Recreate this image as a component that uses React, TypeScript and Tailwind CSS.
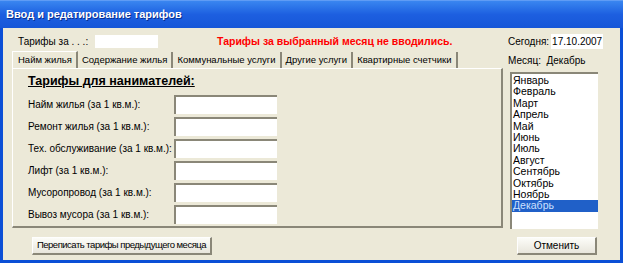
import React from "react";

const months = ["Январь","Февраль","Март","Апрель","Май","Июнь","Июль","Август","Сентябрь","Октябрь","Ноябрь","Декабрь"];
const rows = ["Найм жилья (за 1 кв.м.):","Ремонт жилья (за 1 кв.м.):","Тех. обслуживание (за 1 кв.м.):","Лифт (за 1 кв.м.):","Мусоропровод (за 1 кв.м.):","Вывоз мусора (за 1 кв.м.):"];
const tabs = ["Найм жилья","Содержание жилья","Коммунальные услуги","Другие услуги","Квартирные счетчики"];

export default function App() {
  return (
    <div className="w-[623px] h-[263px] flex flex-col bg-[#0b4fd6] overflow-hidden text-[10px] text-black" style={{ fontFamily: '"Liberation Sans", Arial, sans-serif' }}>
      <div className="h-[28px] shrink-0 flex items-center pl-[6px] bg-gradient-to-b from-[#3a86f0] via-[#1d5fe0] to-[#1656d8] border-t border-[#5f9cf5]">
        <span className="text-white font-bold text-[11px]" style={{ textShadow: "1px 1px 0 #0a2f8f" }}>Ввод и редатирование тарифов</span>
      </div>
      <div className="flex-1 mx-[3px] mb-[3px] bg-[#ece9d8] flex flex-col">
        <div className="flex">
          {/* left column */}
          <div className="ml-[9px] w-[491px] flex flex-col">
            <div className="h-[25px] flex items-center pt-[2px]">
              <span className="ml-[6px] w-[77px] whitespace-nowrap">Тарифы за . . .:</span>
              <div className="w-[63px] h-[13px] bg-white" />
              <span className="ml-[59px] text-[#ff0000] font-bold text-[10.5px] whitespace-nowrap">Тарифы за выбранный месяц не вводились.</span>
            </div>
            <div className="h-[15px] flex items-end">
              {tabs.map((t, i) => (
                <div key={t} className={"flex items-center px-[4px] text-[9.5px] border-r-2 border-r-[#8a8778] " + (i === 0 ? "h-[17px] border-l border-t border-white bg-[#ece9d8] pl-[5px]" : "h-[16px]")}>
                  <span className="whitespace-nowrap">{t}</span>
                </div>
              ))}
            </div>
            <div className="h-[160px] border-l border-t border-white border-r-2 border-b-2 border-r-[#8a8778] border-b-[#8a8778] pl-[15px] pt-[4px]">
              <div className="font-bold underline text-[12.5px] leading-[16px] whitespace-nowrap">Тарифы для нанимателей:</div>
              <div className="mt-[6px] flex flex-col gap-[3px]">
                {rows.map((r) => (
                  <div key={r} className="flex items-center h-[19px]">
                    <span className="w-[146px] whitespace-nowrap">{r}</span>
                    <div className="w-[103px] h-[19px] bg-white border-t-2 border-l-2 border-[#8a8778]" />
                  </div>
                ))}
              </div>
            </div>
          </div>
          {/* right column */}
          <div className="ml-[5px] w-[92px] flex flex-col">
            <div className="h-[25px] flex items-center pt-[2px] whitespace-nowrap">Сегодня: <span className="bg-white ml-[2px] px-[1px]">17.10.2007</span></div>
            <div className="h-[15px] flex items-center whitespace-nowrap">Месяц:&nbsp; Декабрь</div>
            <div className="mt-[4px] ml-[2px] w-[88px] h-[157px] bg-white border-t-2 border-l-2 border-[#8a8778] flex flex-col pt-[1px]">
              {months.map((m, i) => (
                <div key={m} className={"h-[11.4px] leading-[11.4px] pl-[1px] text-[10.5px] " + (i === 11 ? "bg-[#2060c8] text-[#cde0ff]" : "")}>{m}</div>
              ))}
            </div>
          </div>
        </div>
        <div className="flex justify-between mt-[8px] pl-[29px] pr-[23px]">
          <div className="w-[180px] h-[18px] flex items-center justify-center whitespace-nowrap text-[9.5px] tracking-[-0.5px] bg-gradient-to-b from-[#fcfcf8] to-[#e8e6dc] border-t border-l border-[#fefefe] border-r-2 border-b-2 border-r-[#8a8778] border-b-[#8a8778]">Переписать тарифы предыдущего месяца</div>
          <div className="w-[80px] h-[18px] flex items-center justify-center whitespace-nowrap bg-gradient-to-b from-[#fcfcf8] to-[#e8e6dc] border-t border-l border-[#fefefe] border-r-2 border-b-2 border-r-[#8a8778] border-b-[#8a8778]">Отменить</div>
        </div>
      </div>
    </div>
  );
}
